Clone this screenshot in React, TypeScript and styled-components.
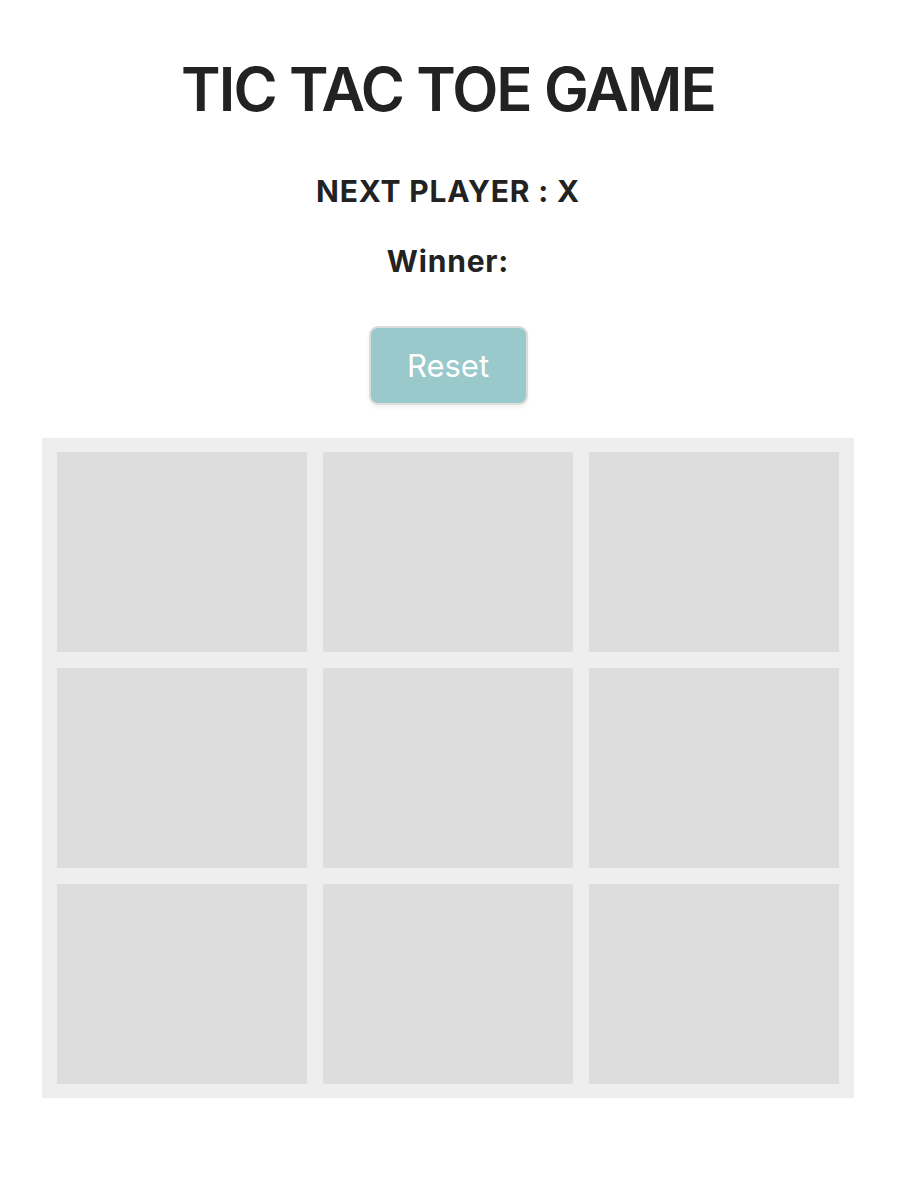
import styled, { createGlobalStyle } from "styled-components";

const GlobalStyle = createGlobalStyle`
  body {
    margin: 0;
    background: #ffffff;
    font-family: Inter, "Noto Sans", sans-serif;
    color: #222222;
  }
`;

const App = () => {
  const squares: (string | null)[] = Array(9).fill(null);
  const nextPlayer = "X";
  const winner = "";

  return (
    <Page>
      <GlobalStyle />
      <Title>TIC TAC TOE GAME</Title>
      <Status>NEXT PLAYER : {nextPlayer}</Status>
      <Status>Winner: {winner}</Status>
      <ResetButton>Reset</ResetButton>
      <Board>
        {squares.map((value, i) => (
          <Square key={i}>{value}</Square>
        ))}
      </Board>
    </Page>
  );
};

export default App;

const Page = styled.div`
  width: 896px;
  display: flex;
  flex-direction: column;
  align-items: center;
  padding: 56px 0 40px;
`;

const Title = styled.h1`
  margin: 0;
  font-size: 60px;
  font-weight: 600;
  line-height: 66px;
  letter-spacing: -1.9px;
`;

const Status = styled.h3`
  margin: 53px 0 0;
  font-size: 30px;
  font-weight: 700;
  line-height: 32px;
  letter-spacing: 0.8px;
  & + & {
    margin-top: 38px;
  }
`;

const ResetButton = styled.button`
  margin-top: 49px;
  width: 159px;
  height: 79px;
  border: 2px solid #dcdcdc;
  border-radius: 9px;
  background: #99c9cb;
  color: #ffffff;
  font-family: Inter, "Noto Sans", sans-serif;
  font-size: 31px;
  box-shadow: 0 3px 4px rgba(0, 0, 0, 0.05);
  cursor: pointer;
`;

const Board = styled.div`
  margin-top: 33px;
  display: grid;
  grid-template-columns: repeat(3, 250px);
  grid-auto-rows: 200px;
  gap: 16px;
  padding: 14px 15px;
  background: #eeeeee;
`;

const Square = styled.div`
  background: #dddddd;
`;
